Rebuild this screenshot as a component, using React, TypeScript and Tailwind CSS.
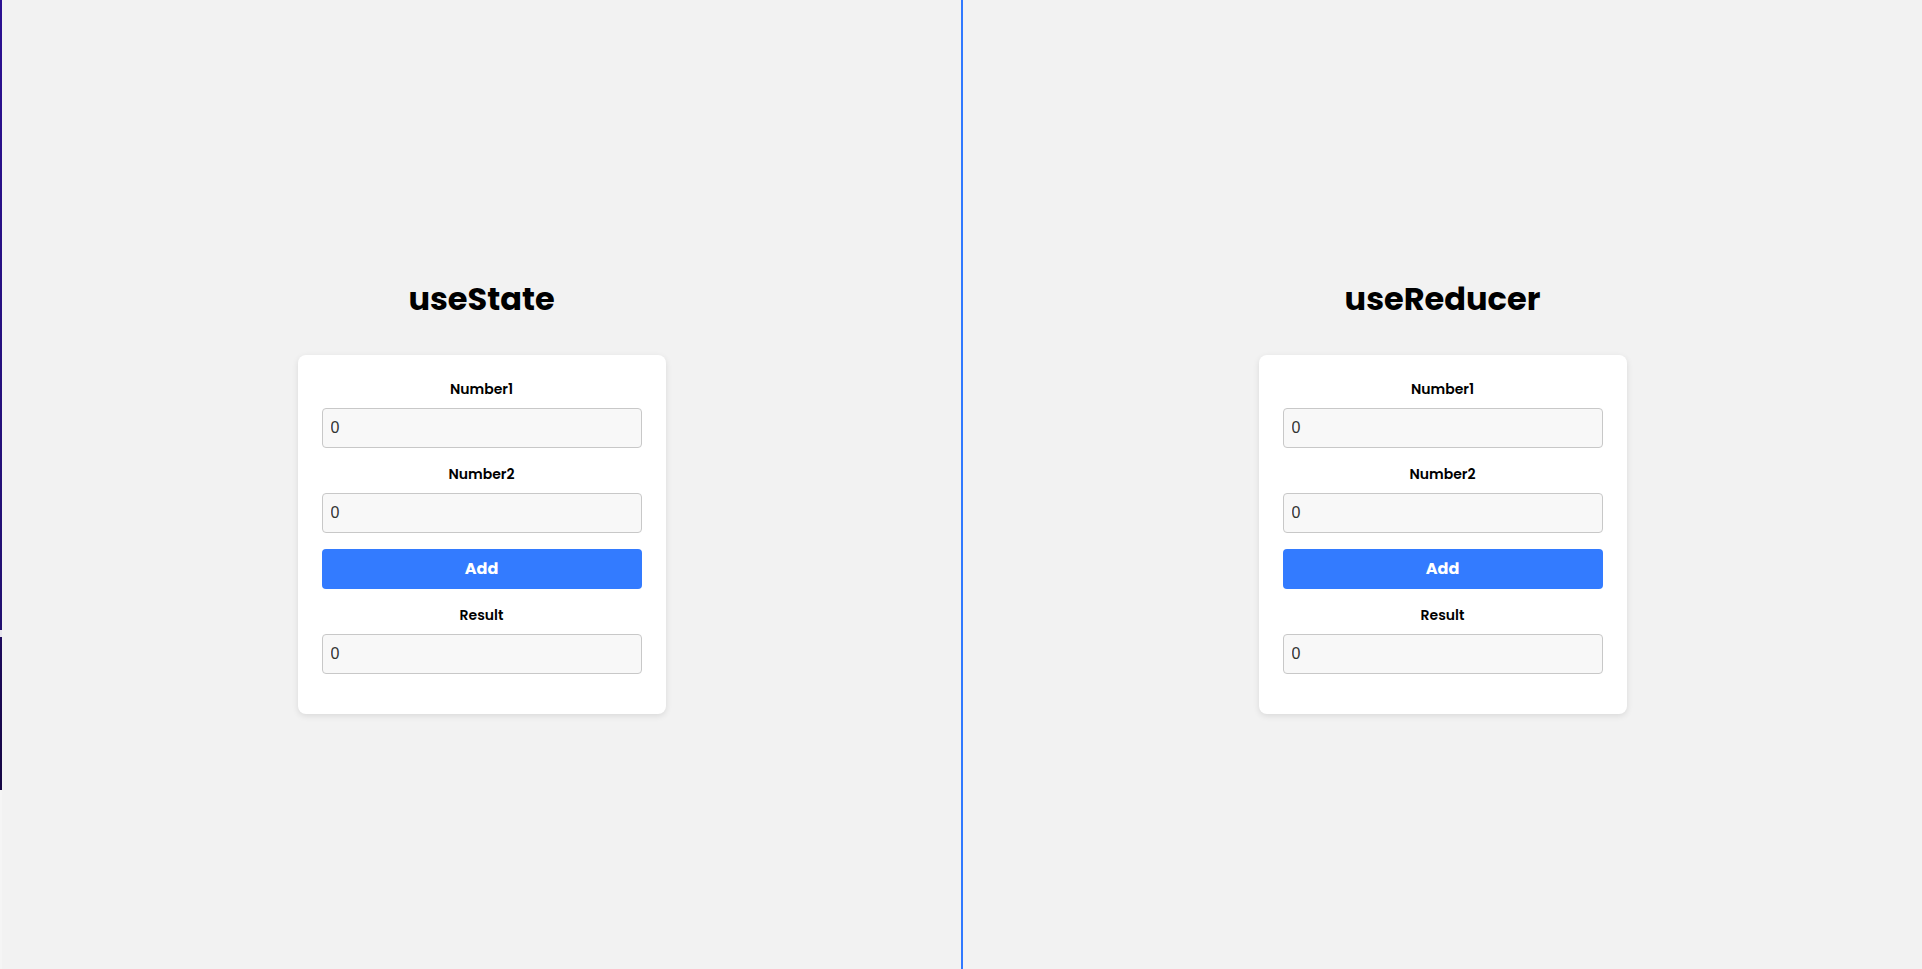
import { useReducer, useState } from "react";

const HEAD = "font-['Poppins','Inter','Noto_Sans',sans-serif]";

type Vals = { a: string; b: string; sum: number };
type Act = { type: "a" | "b"; value: string } | { type: "add" };

function reducer(s: Vals, act: Act): Vals {
  if (act.type === "add") return { ...s, sum: Number(s.a) + Number(s.b) };
  return { ...s, [act.type]: act.value };
}

function Field({ label, value, onChange, readOnly }: { label: string; value: string | number; onChange?: (v: string) => void; readOnly?: boolean }) {
  return (
    <div className="mb-4 flex flex-col">
      <label className={`${HEAD} text-center text-[14px] leading-[21px] font-semibold text-black mb-2`}>{label}</label>
      <input
        type="number"
        value={value}
        readOnly={readOnly}
        onChange={(e) => onChange?.(e.target.value)}
        className="h-10 w-full rounded-[4px] border border-[#c8c8c8] bg-[#f8f8f8] px-2 font-['Liberation_Sans',Arial,sans-serif] text-[16px] text-[#333] outline-none [appearance:textfield]"
      />
    </div>
  );
}

function Card({ title, a, b, sum, setA, setB, add }: { title: string; a: string; b: string; sum: number; setA: (v: string) => void; setB: (v: string) => void; add: () => void }) {
  return (
    <div className="flex flex-1 flex-col items-center justify-center">
      <h1 className={`${HEAD} mt-[19px] mb-8 text-[32px] leading-[48px] font-bold text-black`}>{title}</h1>
      <div className="w-[368px] rounded-lg bg-white p-6 shadow-[0_2px_6px_rgba(0,0,0,0.1)]">
        <Field label="Number1" value={a} onChange={setA} />
        <Field label="Number2" value={b} onChange={setB} />
        <button
          onClick={add}
          className={`${HEAD} mb-4 h-10 w-full rounded-[4px] bg-[#337bff] text-[16px] font-bold text-white`}
        >
          Add
        </button>
        <Field label="Result" value={sum} readOnly />
      </div>
    </div>
  );
}

function StateCalc() {
  const [a, setA] = useState("0");
  const [b, setB] = useState("0");
  const [sum, setSum] = useState(0);
  return <Card title="useState" a={a} b={b} sum={sum} setA={setA} setB={setB} add={() => setSum(Number(a) + Number(b))} />;
}

function ReducerCalc() {
  const [s, dispatch] = useReducer(reducer, { a: "0", b: "0", sum: 0 });
  return (
    <Card
      title="useReducer"
      a={s.a}
      b={s.b}
      sum={s.sum}
      setA={(v) => dispatch({ type: "a", value: v })}
      setB={(v) => dispatch({ type: "b", value: v })}
      add={() => dispatch({ type: "add" })}
    />
  );
}

export default function App() {
  return (
    <div className="flex h-[969px] w-full bg-[#f2f2f2]">
      {/* barra lateral fina */}
      <div className="flex w-[2px] flex-col">
        <div className="h-[630px] bg-gradient-to-b from-[#2c1192] to-[#221070]" />
        <div className="h-[7px] bg-[#e8e6ee]" />
        <div className="h-[153px] bg-gradient-to-b from-[#1d0a5c] to-[#160744]" />
        <div className="flex-1 bg-[#f5f5f5]" />
      </div>
      <StateCalc />
      <div className="w-[2px] bg-[#3179ff]" />
      <ReducerCalc />
    </div>
  );
}
